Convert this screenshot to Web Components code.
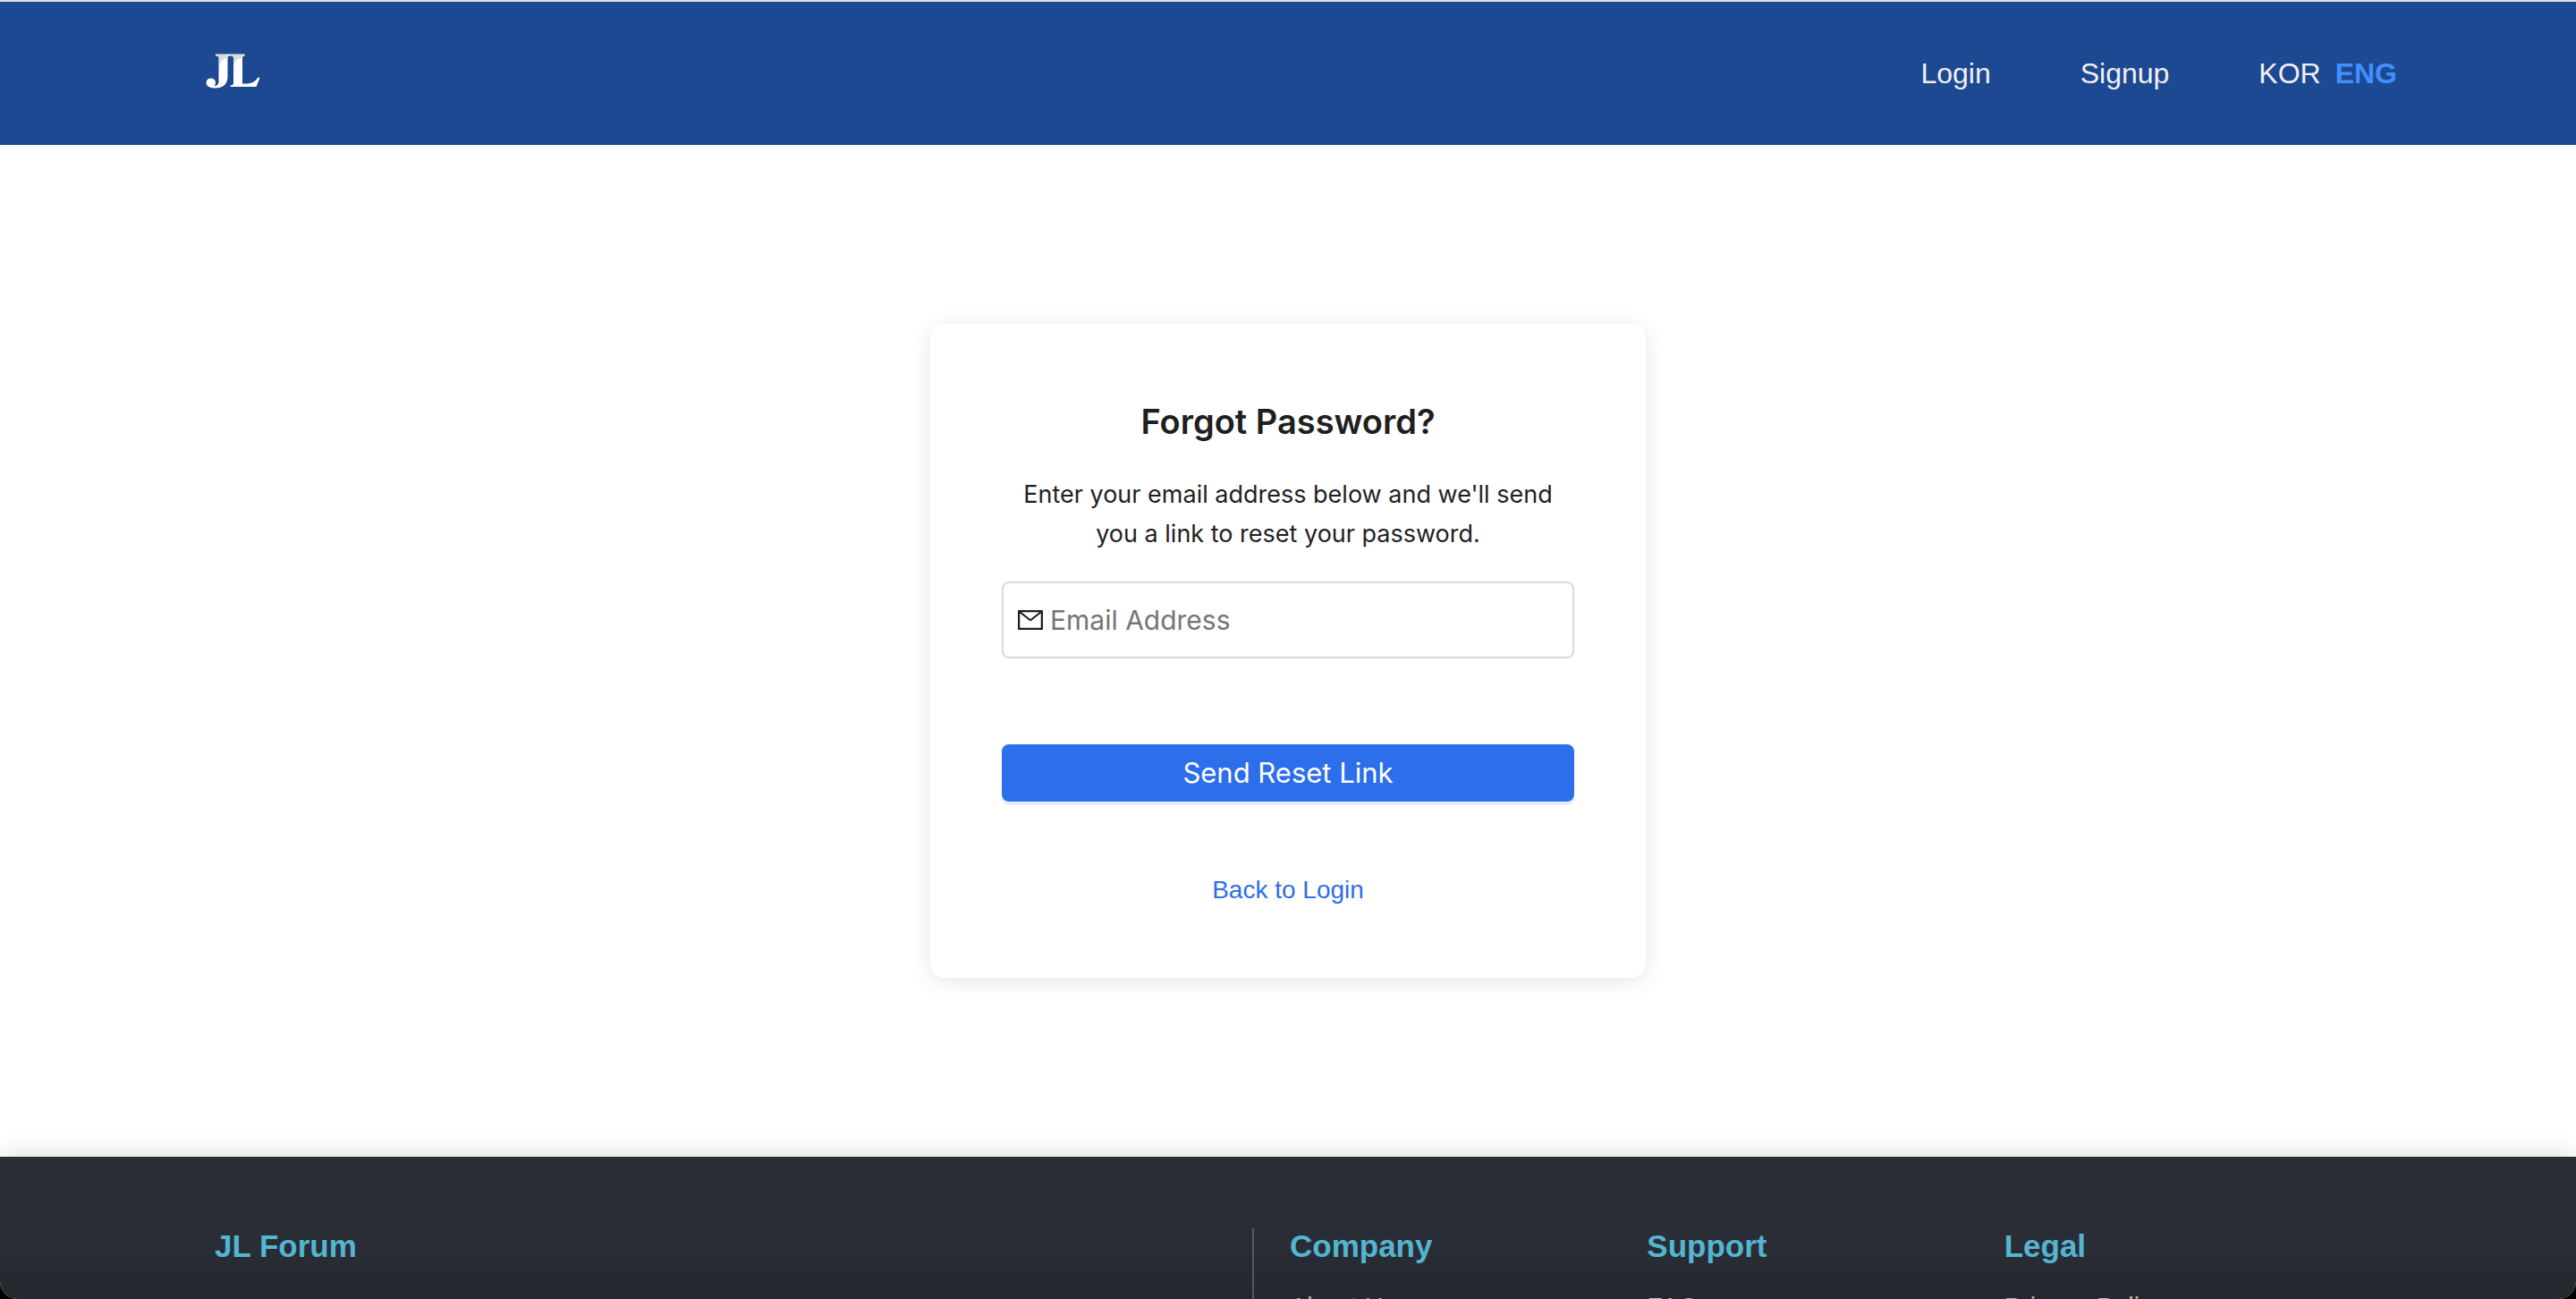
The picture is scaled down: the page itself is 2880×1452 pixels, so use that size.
<!DOCTYPE html>
<html lang="en">
<head>
<meta charset="utf-8">
<title>JL Forum</title>
<style>
  html { background: #000; }
  body { margin: 0; }
</style>
</head>
<body>
<forum-page></forum-page>

<template id="t-page">
  <style>
    :host { display: flex; flex-direction: column; box-sizing: border-box; height: 100vh; overflow: hidden; background: #fff; border-radius: 0 0 20px 20px; border-top: 2px solid #dfe0e0; font-family: "Liberation Sans", Arial, sans-serif; }
    main { flex: none; padding: 200px 40px; display: flex; justify-content: center; }
  </style>
  <site-header></site-header>
  <main><reset-card></reset-card></main>
  <site-footer></site-footer>
</template>

<template id="t-header">
  <style>
    :host { display: block; flex: none; background: #1d4993; }
    header { display: flex; align-items: center; justify-content: space-between; min-height: 160px; padding: 0 200px 0 230px; }
    .logo { display: block; }
    .logo svg { display: block; width: 62px; height: 44px; }
    nav { display: flex; gap: 100px; font-size: 32px; line-height: 40px; }
    .lang { display: flex; gap: 16px; }
    a { color: #f0f0f0; text-decoration: none; }
    a.on { color: #4190ff; font-weight: bold; }
  </style>
  <header>
    <a class="logo" href="#" aria-label="JL home">
      <svg viewBox="0 0 62 44" aria-hidden="true">
        <g fill="#fff">
          <path d="M11 0.500H43.500V2.200Q41 2.500 41 4V33.500H46Q54 33.500 58.500 26.500L60.500 27L56.500 37H27.500V35.500Q31 35 31 33V4Q30.500 2.500 27.700 2.200Q24.500 2.500 24.500 4V25Q24.500 38.500 10 38.500Q0.500 38 0.500 32.500Q1 27.500 6 27.500Q11 28 11 32.500Q11 34.500 9.500 36.300Q14.500 36 14.500 31V4Q14.500 2.500 11 2.200Z"/>
        </g>
        <path fill="#dcdcdc" d="M11 1H24.500V4.500Q16 6 15 14V4Q14.500 2.500 11 2.200ZM28 1H43.500V2.200Q41 2.500 41 4.500Q32 6 31 14V4Q30.500 2.500 28 2.200Z"/>
      </svg>
    </a>
    <nav aria-label="Main">
      <a href="#">Login</a>
      <a href="#">Signup</a>
      <span class="lang"><a href="#">KOR</a><a class="on" href="#">ENG</a></span>
    </nav>
  </header>
</template>

<template id="t-card">
  <style>
    :host { display: block; box-sizing: border-box; width: 800px; max-width: 100%; padding: 80px; border-radius: 16px; background: #fff; box-shadow: 0 4px 24px rgba(0,0,0,.1); color: #1f1f1f; font-family: Inter, sans-serif; text-align: center; }
    h1 { margin: 0 0 31px; font-size: 38px; line-height: 58px; font-weight: 600; }
    p { margin: 0 0 31px; font-size: 27px; line-height: 44px; }
    .field { display: flex; align-items: center; gap: 6px; box-sizing: border-box; height: 86px; border: 2px solid #d9d9d9; border-radius: 8px; padding: 0 14px; margin-bottom: 96px; }
    .field svg { display: block; width: 32px; height: 32px; fill: #1f1f1f; }
    input { flex: 1; min-width: 0; border: 0; outline: 0; padding: 0; background: none; font: 30px/48px Inter, sans-serif; color: #1f1f1f; }
    input::placeholder { color: #757575; opacity: 1; }
    button { display: block; width: 100%; height: 64px; border: 0; padding: 0; border-radius: 8px; background: #2d6eea; box-shadow: 0 4px 0 rgba(5,120,255,.1); color: #fff; font: 31px/48px Inter, sans-serif; }
    .back { display: block; margin-top: 80px; font: 28px/37px "Liberation Sans", Arial, sans-serif; }
    a { color: #2d6eea; text-decoration: none; }
  </style>
  <form>
    <h1>Forgot Password?</h1>
    <p>Enter your email address below and we'll send you a link to reset your password.</p>
    <div class="field">
      <label for="email" aria-label="Email Address"><svg viewBox="0 0 1024 1024" aria-hidden="true"><path d="M928 160H96c-17.700 0-32 14.300-32 32v640c0 17.700 14.300 32 32 32h832c17.700 0 32-14.300 32-32V192c0-17.700-14.300-32-32-32zm-40 110.800V792H136V270.800l-27.600-21.500 39.300-50.500 42.800 33.300h643.100l42.800-33.300 39.300 50.500-27.700 21.500zM833.600 232L512 482 190.400 232l-42.800-33.300-39.300 50.500 27.600 21.500 341.600 265.600a55.990 55.990 0 0 0 68.700 0L888 270.800l27.600-21.500-39.300-50.500-42.700 33.200z"/></svg></label>
      <input id="email" type="email" placeholder="Email Address">
    </div>
    <button type="button">Send Reset Link</button>
    <div class="back"><a href="#">Back to Login</a></div>
  </form>
</template>

<template id="t-footer">
  <style>
    :host { display: block; flex: 1 0 auto; box-shadow: 0 -4px 24px rgba(0,0,0,.12); background: linear-gradient(#2a2d35 0 100px, #24272d 160px); }
    footer { display: grid; grid-template-columns: 1160fr 1240fr; max-width: 2400px; margin: 0 auto; padding: 80px 40px; }
    .cols { display: grid; grid-template-columns: repeat(3, 1fr); border-left: 2px solid #55575c; padding-left: 40px; }
  </style>
  <footer>
    <footer-column heading="JL Forum"></footer-column>
    <div class="cols">
      <footer-column heading="Company"><a href="#">About Us</a></footer-column>
      <footer-column heading="Support"><a href="#">FAQ</a></footer-column>
      <footer-column heading="Legal"><a href="#">Privacy Policy</a></footer-column>
    </div>
  </footer>
</template>

<template id="t-column">
  <style>
    :host { display: block; }
    h2 { margin: 0 0 28px; font-size: 35px; line-height: 40px; font-weight: bold; color: #53b5d0; }
    ::slotted(a) { display: block; font-size: 29px; line-height: 40px; color: #b8b8b8; text-decoration: none; }
  </style>
  <h2></h2>
  <slot></slot>
</template>

<script>
  const stamp = (host, id) => {
    const root = host.attachShadow({ mode: "open" });
    root.append(document.getElementById(id).content.cloneNode(true));
    return root;
  };
  class FooterColumn extends HTMLElement {
    connectedCallback() {
      if (this.shadowRoot) return;
      stamp(this, "t-column").querySelector("h2").textContent = this.getAttribute("heading");
    }
  }
  class SiteFooter extends HTMLElement {
    constructor() { super(); stamp(this, "t-footer"); }
  }
  class ResetCard extends HTMLElement {
    constructor() { super(); stamp(this, "t-card"); }
  }
  class SiteHeader extends HTMLElement {
    constructor() { super(); stamp(this, "t-header"); }
  }
  class ForumPage extends HTMLElement {
    constructor() { super(); stamp(this, "t-page"); }
  }
  customElements.define("footer-column", FooterColumn);
  customElements.define("site-footer", SiteFooter);
  customElements.define("reset-card", ResetCard);
  customElements.define("site-header", SiteHeader);
  customElements.define("forum-page", ForumPage);
</script>
</body>
</html>
